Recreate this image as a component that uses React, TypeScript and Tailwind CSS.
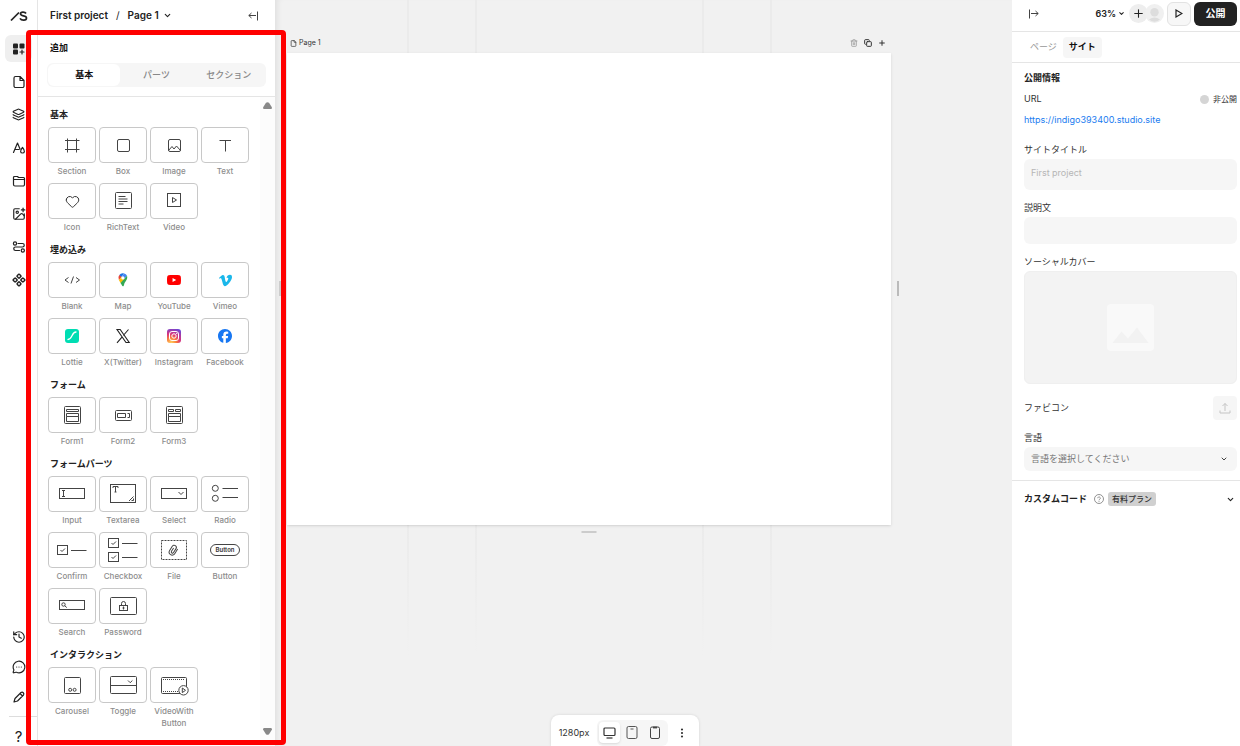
import type { ReactNode } from "react";
import {
  ChevronDown,
  Component,
  Copy,
  EllipsisVertical,
  File,
  Heart,
  History,
  ImagePlus,
  Layers,
  MessageCircleMore,
  Plus,
  Trash2,
} from "lucide-react";
import { SiFacebook, SiVimeo, SiYoutube } from "react-icons/si";

type Tile = { label: string; icon: ReactNode };
type Section = { title: string; tiles: Tile[] };

// Line drawing that fills a tile, coordinates are tile pixels
const Art = ({ children }: { children: ReactNode }) => (
  <svg
    viewBox="1 1 46 34"
    className="h-full w-full"
    fill="none"
    stroke="#444"
    strokeWidth="1"
    aria-hidden="true"
  >
    {children}
  </svg>
);

const sections: Section[] = [
  {
    title: "基本",
    tiles: [
      {
        label: "Section",
        icon: (
          <Art>
            <path d="M19.5 11.5v14M28.5 11.5v14M17 13.5h14.5M17 22.5h14.5" />
          </Art>
        ),
      },
      {
        label: "Box",
        icon: (
          <Art>
            <rect x="18.5" y="12.5" width="12" height="12" rx="1.5" />
          </Art>
        ),
      },
      {
        label: "Image",
        icon: (
          <Art>
            <rect x="18.5" y="12.5" width="12" height="12" rx="1.5" />
            <path d="M18.5 23.5l3.5-4 2 2.5 2.5-3 4 4.5" />
          </Art>
        ),
      },
      {
        label: "Text",
        icon: (
          <Art>
            <path d="M18.5 13.5h11.5M24.5 13.5v11" />
          </Art>
        ),
      },
      {
        label: "Icon",
        icon: <Heart size={15} strokeWidth={1.6} color="#333" />,
      },
      {
        label: "RichText",
        icon: (
          <Art>
            <rect x="16.5" y="9.5" width="16" height="16" rx="1" />
            <path d="M19.5 13.5h7M19.5 16h9M19.5 18.5h9M19.5 21h5" />
          </Art>
        ),
      },
      {
        label: "Video",
        icon: (
          <Art>
            <rect x="17.5" y="10.5" width="13" height="13" />
            <path d="M22.5 14.5v5l4-2.5z" />
          </Art>
        ),
      },
    ],
  },
  {
    title: "埋め込み",
    tiles: [
      {
        label: "Blank",
        icon: (
          <Art>
            <path d="M20.5 15.5l-3.5 2.5 3.5 2.5M28 15.5l3.5 2.5-3.5 2.5M25.5 14.5l-2.5 7" />
          </Art>
        ),
      },
      {
        label: "Map",
        icon: (
          <Art>
            <g stroke="none">
              <path d="M20.3 12.9A4.600 4.600 0 0 1 25.2 11.6L21.7 15.8z" fill="#1a73e8" />
              <path d="M25.2 11.6A4.600 4.600 0 0 1 28 13.8L24.8 17.6 22.4 15z" fill="#4285f4" />
              <path d="M20.3 12.9L22.5 14.9 19.9 18A4.600 4.600 0 0 1 20.3 12.9z" fill="#ea4335" />
              <path d="M19.9 18L22.4 15.1 25.5 17.3 21.6 21z" fill="#fbbc04" />
              <path d="M28 13.8C29.2 17.5 26 19.3 25.2 22.2 24.9 23.4 24.7 24.3 23.9 24.3 23 24.3 22.9 22.8 21.5 21z" fill="#34a853" />
              <circle cx="23.9" cy="15.9" r="1.6" fill="#fff" />
            </g>
          </Art>
        ),
      },
      { label: "YouTube", icon: <SiYoutube size={14} color="#ff0000" /> },
      { label: "Vimeo", icon: <SiVimeo size={13} color="#1ab7ea" /> },
      {
        label: "Lottie",
        icon: (
          <Art>
            <rect x="17" y="11" width="14" height="14" rx="3" fill="#00ddb3" stroke="none" />
            <path
              d="M20 21.5c4.5 0 3.5-7.5 8-7.5"
              stroke="#fff"
              strokeWidth="1.3"
              strokeLinecap="round"
            />
          </Art>
        ),
      },
      {
        label: "X(Twitter)",
        icon: (
          <Art>
            <path d="M18 11.5h3.200l9 13h-3.200zM29.500 11.500l-5.200 6M23.200 18.900l-5.200 5.900" stroke="#222" strokeWidth="1.1" />
          </Art>
        ),
      },
      {
        label: "Instagram",
        icon: (
          <Art>
            <defs>
              <radialGradient id="insta" cx="0.3" cy="1" r="1.1">
                <stop offset="0" stopColor="#ffd45c" />
                <stop offset="0.35" stopColor="#f9793b" />
                <stop offset="0.6" stopColor="#d9337c" />
                <stop offset="1" stopColor="#6a48d8" />
              </radialGradient>
            </defs>
            <rect x="17" y="11" width="14" height="14" rx="3" fill="url(#insta)" stroke="none" />
            <rect x="19.5" y="13.5" width="9" height="9" rx="2.5" stroke="#fff" />
            <circle cx="24" cy="18" r="2.2" stroke="#fff" />
            <circle cx="26.7" cy="15.4" r=".6" fill="#fff" stroke="none" />
          </Art>
        ),
      },
      { label: "Facebook", icon: <SiFacebook size={14} color="#1877f2" /> },
    ],
  },
  {
    title: "フォーム",
    tiles: [
      {
        label: "Form1",
        icon: (
          <Art>
            <rect x="16.5" y="9.5" width="16" height="17" rx="1" />
            <path d="M18.5 12.5h12v2h-12zM18.5 16.5h12v3h-12zM18.5 19.5h12v5h-12z" />
          </Art>
        ),
      },
      {
        label: "Form2",
        icon: (
          <Art>
            <rect x="16.5" y="13.5" width="16" height="10" rx="1" />
            <path d="M18.5 16.5h8v4h-8zM28.5 16.5h2v4h-2" />
          </Art>
        ),
      },
      {
        label: "Form3",
        icon: (
          <Art>
            <rect x="16.5" y="9.5" width="16" height="17" rx="1" />
            <path d="M18.5 12.5h5v2h-5zM25.5 12.5h5v2h-5zM18.5 16.5h12v3h-12zM18.5 19.5h12v5h-12z" />
          </Art>
        ),
      },
    ],
  },
  {
    title: "フォームパーツ",
    tiles: [
      {
        label: "Input",
        icon: (
          <Art>
            <rect x="11.5" y="12.5" width="25" height="10" />
            <path d="M14 14.5h3M15.5 14.5v6M14 20.5h3" />
          </Art>
        ),
      },
      {
        label: "Textarea",
        icon: (
          <Art>
            <rect x="11.5" y="8.5" width="25" height="18" />
            <path d="M14 12v-1.5h5v1.5M16.5 10.5v5.5M15.5 16h2" />
            <path d="M30 25l4.5-4.5M32.5 24.5h2v-2" />
          </Art>
        ),
      },
      {
        label: "Select",
        icon: (
          <Art>
            <rect x="11.5" y="12.5" width="25" height="10" />
            <path d="M28.5 16l2.5 2.5 2.5-2.5" />
          </Art>
        ),
      },
      {
        label: "Radio",
        icon: (
          <Art>
            <circle cx="14.3" cy="12.3" r="3" />
            <circle cx="14.3" cy="22.3" r="3" />
            <path d="M21.5 12.5h15.5M21.5 21.5h15.5" />
          </Art>
        ),
      },
      {
        label: "Confirm",
        icon: (
          <Art>
            <rect x="9.5" y="13.5" width="10" height="9" />
            <path d="M12.5 18l1.5 1.5 3-3M23 18.5h15.5" />
          </Art>
        ),
      },
      {
        label: "Checkbox",
        icon: (
          <Art>
            <rect x="9.5" y="6.5" width="10" height="9" />
            <rect x="9.5" y="20.5" width="10" height="9" />
            <path d="M12.5 11l1.5 1.5 3-3M12.5 25l1.5 1.5 3-3M23 11.5h15.5M23 25.5h15.5" />
          </Art>
        ),
      },
      {
        label: "File",
        icon: (
          <Art>
            <rect x="11.5" y="8.5" width="25" height="19" strokeDasharray="2 1" />
            <g transform="rotate(32 23.5 18)">
              <path d="M26.5 15v5.5a3 3 0 0 1-6 0v-5a2.200 2.200 0 0 1 4.400 0v4.700a1.200 1.200 0 0 1-2.400 0v-4" />
            </g>
          </Art>
        ),
      },
      {
        label: "Button",
        icon: (
          <Art>
            <rect x="9.5" y="12.5" width="29" height="11" rx="5.5" />
            <text
              x="24"
              y="20.200"
              textAnchor="middle"
              className="font-['Inter'] text-[6px] font-semibold"
              fill="#333"
              stroke="none"
            >
              Button
            </text>
          </Art>
        ),
      },
      {
        label: "Search",
        icon: (
          <Art>
            <rect x="11.5" y="12.5" width="25" height="9" />
            <circle cx="15.5" cy="16.5" r="1.7" />
            <path d="M16.8 17.8l2 1.8" />
          </Art>
        ),
      },
      {
        label: "Password",
        icon: (
          <Art>
            <rect x="11.5" y="9.5" width="26" height="17" rx="1" />
            <rect x="20.5" y="17.5" width="8" height="5" />
            <path d="M22.5 17.5v-2a2 2 0 0 1 4 0v2M24.5 18.5v3M23.500 20h2" />
          </Art>
        ),
      },
    ],
  },
  {
    title: "インタラクション",
    tiles: [
      {
        label: "Carousel",
        icon: (
          <Art>
            <rect x="16.5" y="10.5" width="16" height="16" rx="1" />
            <circle cx="22.2" cy="22.8" r="1.5" />
            <circle cx="26.6" cy="22.8" r="1.5" />
          </Art>
        ),
      },
      {
        label: "Toggle",
        icon: (
          <Art>
            <rect x="11.5" y="9.5" width="26" height="17" rx="1" />
            <path d="M11.5 18.5h26M29 13.5l2.200 2.200 2.200-2.200" />
          </Art>
        ),
      },
      {
        label: "VideoWith Button",
        icon: (
          <Art>
            <rect x="11.5" y="10.5" width="25" height="16" rx="1" />
            <path d="M13 12.5h22M13 24.5h16" strokeDasharray="1 1" />
            <circle cx="33.5" cy="23.3" r="4.7" fill="#fff" />
            <path d="M32.3 21v4.600l3.200-2.300z" />
          </Art>
        ),
      },
    ],
  },
];

// 14px icons of the left rail
const RailSvg = ({ children }: { children: ReactNode }) => (
  <svg
    viewBox="0 0 14 14"
    className="h-3.5 w-3.5 shrink-0"
    fill="none"
    stroke="#222"
    strokeWidth="1.2"
    strokeLinecap="round"
    strokeLinejoin="round"
    aria-hidden="true"
  >
    {children}
  </svg>
);

const railTop = [
  {
    name: "追加",
    icon: (
      <RailSvg>
        <g fill="#222" stroke="none">
          <rect x="1" y="1.5" width="5" height="5" rx="1" />
          <rect x="7.5" y="1.5" width="5" height="5" rx="1" />
          <rect x="1" y="7.5" width="5" height="5" rx="1" />
        </g>
        <path d="M10 8v4M8 10h4" />
      </RailSvg>
    ),
  },
  {
    name: "ページ",
    icon: (
      <RailSvg>
        <path d="M3.5 1.5h4.5l4 4v5.5a1.5 1.5 0 0 1-1.5 1.5h-7A1.5 1.5 0 0 1 2 11V3a1.5 1.5 0 0 1 1.5-1.5zM8 1.5v4h4" />
      </RailSvg>
    ),
  },
  { name: "レイヤー", icon: <Layers size={13} strokeWidth={2} color="#222" /> },
  {
    name: "スタイル",
    icon: (
      <RailSvg>
        <path d="M1.500 11.500L5.500 2l2.500 6M3 8.500h4M10.500 6.500c3 3.500 2 5.500 0 5.500s-3-2 0-5.500z" />
      </RailSvg>
    ),
  },
  {
    name: "フォルダ",
    icon: (
      <RailSvg>
        <path d="M1.5 5.5h11M1.5 10.5v-7a1 1 0 0 1 1-1h3l1 1h5a1 1 0 0 1 1 1v6a1.500 1.500 0 0 1-1.500 1.500H3a1.500 1.500 0 0 1-1.500-1.500z" />
      </RailSvg>
    ),
  },
  { name: "画像", icon: <ImagePlus size={14} strokeWidth={2} color="#222" /> },
  {
    name: "フロー",
    icon: (
      <RailSvg>
        <circle cx="3" cy="3.5" r="1.6" />
        <circle cx="10.8" cy="10.5" r="1.6" />
        <path d="M6 3.500h4.500a1.500 1.500 0 0 1 0 3.500H3.500a1.600 1.600 0 0 0 0 3.500H7.500" />
      </RailSvg>
    ),
  },
  {
    name: "コンポーネント",
    icon: <Component size={14} strokeWidth={2.4} color="#222" />,
  },
];

const railBottom = [
  { name: "履歴", icon: <History size={14} strokeWidth={2} color="#222" /> },
  {
    name: "コメント",
    icon: <MessageCircleMore size={14} strokeWidth={2} color="#222" />,
  },
  {
    name: "編集",
    icon: (
      <RailSvg>
        <path d="M2 12l1-3.500 6-6a1.800 1.800 0 0 1 2.500 2.500L5.500 11zM8 3.500l2.500 2.500" />
      </RailSvg>
    ),
  },
];

const Rail = () => (
  <nav className="flex w-[38px] shrink-0 flex-col border-r border-[#e5e5e5] bg-white pl-[5px]">
    <div className="flex h-[35px] w-[27px] items-center justify-center pb-1">
      <svg
        viewBox="0 0 18 12"
        className="h-3 w-[18px]"
        fill="none"
        stroke="#222"
        strokeWidth="1.7"
        aria-hidden="true"
      >
        <path d="M1 10.500L9 2.500" />
        <path d="M16 3.500c-1-2-5.500-2-5.500.3 0 3 6 1.200 6 4.200 0 2.800-5 3-6.500.3" />
      </svg>
    </div>
    <div className="flex flex-col gap-1.5">
      {railTop.map((item, i) => (
        <button
          key={item.name}
          aria-label={item.name}
          className={
            i === 0
              ? "flex h-[27px] w-[27px] items-center justify-center rounded-md bg-[#efefef]"
              : "flex h-[27px] w-[27px] items-center justify-center"
          }
        >
          {item.icon}
        </button>
      ))}
    </div>
    <div className="mt-auto flex flex-col">
      {railBottom.map((item) => (
        <button
          key={item.name}
          aria-label={item.name}
          className="flex h-[30px] w-[27px] items-center justify-center"
        >
          {item.icon}
        </button>
      ))}
      <div className="mt-1 ml-1 border-t border-[#ddd]" />
      <button
        aria-label="ヘルプ"
        className="mt-[11px] flex h-[18px] w-[27px] items-center justify-center text-[15px] text-[#222]"
      >
        ?
      </button>
    </div>
  </nav>
);

const ElementPanel = () => (
  <aside className="flex w-[237px] shrink-0 flex-col bg-white">
    <header className="flex h-[31px] shrink-0 items-center pr-[17px] pl-3 text-[10px] font-semibold text-[#222]">
      <span>First project</span>
      <span className="px-2 font-normal">/</span>
      <button className="flex items-center gap-1">
        Page 1
        <ChevronDown size={9} strokeWidth={3} />
      </button>
      <button aria-label="パネルを閉じる" className="ml-auto">
        <svg
          viewBox="0 0 10 10"
          className="h-2.5 w-2.5"
          fill="none"
          stroke="#444"
          aria-hidden="true"
        >
          <path d="M9.500 .500v9M8 4.500H.8M3.500 2L.8 4.500 3.500 7" />
        </svg>
      </button>
    </header>
    <h2 className="px-3 pt-[11px] text-[9px] leading-3 font-bold text-[#111]">
      追加
    </h2>
    <div className="mx-[9px] mt-[9px] flex h-6 rounded-md bg-[#f6f6f6] p-px text-[9px] font-medium text-[#888]">
      <button className="flex-1 rounded-md bg-white font-bold text-[#111]">
        基本
      </button>
      <button className="flex-1">パーツ</button>
      <button className="flex-1">セクション</button>
    </div>
    <div className="mt-[9px] flex min-h-0 flex-1 border-t border-[#e5e5e5]">
      <div className="flex min-w-0 flex-1 flex-col gap-[11px] overflow-hidden pt-3 pl-2.5">
        {sections.map((section) => (
          <section key={section.title}>
            <h3 className="mb-1.5 pl-0.5 text-[9px] leading-3 font-bold text-[#222]">
              {section.title}
            </h3>
            <div className="flex flex-wrap gap-x-[3px] gap-y-1.5">
              {section.tiles.map((tile) => (
                <button
                  key={tile.label}
                  className="flex w-12 flex-col items-center"
                >
                  <span className="flex h-9 w-12 items-center justify-center rounded border border-[#c8c8c8] bg-white">
                    {tile.icon}
                  </span>
                  <span className="mt-0.5 text-center text-[8px] leading-3 font-medium text-[#8d8d8d]">
                    {tile.label}
                  </span>
                </button>
              ))}
            </div>
          </section>
        ))}
      </div>
      <div className="flex w-[15px] shrink-0 flex-col items-center justify-between bg-[#fcfcfc] pt-[5px] pb-[11px]">
        <svg viewBox="0 0 9 7" className="h-[7px] w-[9px]" fill="#888" aria-hidden="true">
          <path d="M3 .8Q4.500-.5 6 .8L9 5.500Q9 7 8 7H1Q0 7 0 5.500z" />
        </svg>
        <svg viewBox="0 0 9 7" className="h-[7px] w-[9px]" fill="#888" aria-hidden="true">
          <path d="M3 6.200Q4.500 7.500 6 6.200L9 1.500Q9 0 8 0H1Q0 0 0 1.500z" />
        </svg>
      </div>
    </div>
  </aside>
);

const Canvas = () => (
  <main className="relative flex min-w-0 flex-1 flex-col bg-[#f1f1f1] shadow-[inset_6px_0_6px_-4px_rgba(0,0,0,0.08)]">
    {/* faint guide lines of the breakpoints */}
    <svg
      className="pointer-events-none absolute inset-0 h-full w-full"
      aria-hidden="true"
    >
      <defs>
        <linearGradient id="guide" x1="0" y1="0" x2="0" y2="1">
          <stop offset="0" stopColor="#ebebeb" />
          <stop offset="0.7" stopColor="#ebebeb" />
          <stop offset="0.88" stopColor="#ebebeb" stopOpacity="0" />
        </linearGradient>
      </defs>
      <g fill="url(#guide)">
        <rect x="132" y="0" width="2" height="100%" />
        <rect x="200" y="0" width="2" height="100%" />
        <rect x="427" y="0" width="2" height="100%" />
        <rect x="495" y="0" width="2" height="100%" />
      </g>
    </svg>
    <div className="relative pr-[121px] pl-3">
      <div className="flex h-[53px] items-end pr-[5px] pb-1.5 pl-[3px] text-[7px] leading-2 text-[#333]">
        <span className="flex items-center gap-0.5">
          <File size={7} strokeWidth={2.4} />
          Page 1
        </span>
        <div className="ml-auto flex gap-1.5">
          <button aria-label="削除" className="text-[#999]">
            <Trash2 size={8} strokeWidth={2.4} />
          </button>
          <button aria-label="複製">
            <Copy size={8} strokeWidth={3} />
          </button>
          <button aria-label="追加">
            <Plus size={8} strokeWidth={3} />
          </button>
        </div>
      </div>
      <div className="relative aspect-[32/25] bg-white shadow-sm">
        <div className="absolute top-1/2 -left-2 h-[15px] w-0.5 -translate-y-2 bg-[#ccc]" />
        <div className="absolute top-1/2 -right-2 h-[15px] w-0.5 -translate-y-2 bg-[#bbb]" />
        <div className="absolute -bottom-2 left-1/2 h-0.5 w-[15px] -translate-x-1/2 bg-[#ccc]" />
      </div>
    </div>
    <div className="relative mt-auto flex justify-center pr-[37px]">
      <div className="flex h-[31px] items-center rounded-t-lg bg-white pt-1 pr-[11px] pl-2 text-[9px] text-[#333] shadow-[0_0_3px_rgba(0,0,0,0.12)]">
        <span>1280px</span>
        <div className="ml-2 flex h-[26px] items-center rounded-md bg-[#f6f6f6] px-0.5">
          <button
            aria-label="デスクトップ"
            className="flex h-[21px] w-[21px] items-center justify-center rounded bg-white shadow-sm"
          >
            <svg
              viewBox="0 0 13 12"
              className="h-3 w-[13px]"
              fill="none"
              stroke="#333"
              strokeWidth="1.2"
              aria-hidden="true"
            >
              <rect x="1" y="1" width="11" height="7.5" rx="1" />
              <path d="M3.500 11h6" />
            </svg>
          </button>
          <button
            aria-label="タブレット"
            className="flex h-[21px] w-[23px] items-center justify-center"
          >
            <svg
              viewBox="0 0 12 13"
              className="h-[13px] w-3"
              fill="none"
              stroke="#555"
              aria-hidden="true"
            >
              <rect x="1" y=".5" width="10" height="12" rx="1.5" />
              <path d="M4.500 3h3" />
            </svg>
          </button>
          <button
            aria-label="モバイル"
            className="flex h-[21px] w-[23px] items-center justify-center"
          >
            <svg
              viewBox="0 0 10 13"
              className="h-[13px] w-2.5"
              fill="none"
              stroke="#444"
              aria-hidden="true"
            >
              <rect x=".5" y="1" width="9" height="11.5" rx="1.5" />
              <path d="M3 1.500h4" strokeWidth="1.8" />
            </svg>
          </button>
        </div>
        <button aria-label="メニュー" className="ml-2">
          <EllipsisVertical size={12} strokeWidth={2.4} />
        </button>
      </div>
    </div>
  </main>
);

const labelClass = "block text-[9px] leading-3 text-[#333]";

const SettingsPanel = () => (
  <aside className="flex w-[228px] shrink-0 flex-col bg-white text-[#222] shadow-[0_0_6px_rgba(0,0,0,0.08)]">
    <header className="flex h-8 shrink-0 items-center border-b border-[#e5e5e5] pr-[3px] pb-1 pl-[17px]">
      <button aria-label="パネルを閉じる">
        <svg
          viewBox="0 0 10 10"
          className="h-2.5 w-2.5"
          fill="none"
          stroke="#444"
          aria-hidden="true"
        >
          <path d="M.5 .500v9M2 4.500h7.200M6.500 2L9.200 4.500 6.500 7" />
        </svg>
      </button>
      <button className="ml-auto flex items-center gap-0.5 text-[9px] font-semibold">
        63%
        <ChevronDown size={7} strokeWidth={3.5} />
      </button>
      <button
        aria-label="招待"
        className="ml-1 flex h-[19px] w-[19px] items-center justify-center rounded-full bg-[#eee]"
      >
        <Plus size={13} strokeWidth={2} />
      </button>
      <svg viewBox="0 0 19 19" className="-ml-[3px] h-[19px] w-[19px]" aria-hidden="true">
        <circle cx="9.5" cy="9.5" r="9.5" fill="#f0f0f0" />
        <circle cx="9.5" cy="8.2" r="4.2" fill="#ddd" />
        <path d="M4 15.500q5.500-4 11 0-5.500 4.500-11 0z" fill="#ddd" />
      </svg>
      <button
        aria-label="プレビュー"
        className="ml-[3px] flex h-6 w-6 items-center justify-center rounded-md border border-[#e2e2e2] bg-[#f7f7f7]"
      >
        <svg
          viewBox="0 0 8 9"
          className="h-[9px] w-2"
          fill="none"
          stroke="#222"
          strokeWidth="1.2"
          aria-hidden="true"
        >
          <path d="M1 1v7l6-3.500z" />
        </svg>
      </button>
      <button className="ml-[3px] h-6 w-[43px] rounded-md bg-[#222] text-[10px] font-bold text-white">
        公開
      </button>
    </header>
    <div className="flex h-[31px] shrink-0 items-center border-b border-[#e5e5e5] pl-3 text-[9px]">
      <button className="h-[21px] px-1.5 text-[#999]">ページ</button>
      <button className="h-[21px] rounded bg-[#f6f6f6] px-1.5 font-bold text-[#111]">
        サイト
      </button>
    </div>
    <div className="flex flex-col border-b border-[#e5e5e5] pt-[9px] pr-[3px] pb-[9px] pl-3">
      <h2 className="text-[9px] leading-3 font-bold">公開情報</h2>
      <div className="mt-[9px] flex items-center text-[9px] leading-3 text-[#333]">
        <span>URL</span>
        <span className="mr-1 ml-auto h-[9px] w-[9px] rounded-full bg-[#d5d5d5]" />
        <span className="text-[8px]">非公開</span>
      </div>
      <a
        href="https://indigo393400.studio.site"
        className="mt-[9px] text-[9px] leading-3 text-[#1a7cf0]"
      >
        https://indigo393400.studio.site
      </a>
      <label htmlFor="title" className={`mt-[18px] ${labelClass}`}>
        サイトタイトル
      </label>
      <input
        id="title"
        placeholder="First project"
        className="mt-[3px] h-[31px] w-full rounded-md bg-[#f6f6f6] px-[7px] pb-1 text-[9px] placeholder:text-[#b5b5b5]"
      />
      <label htmlFor="description" className={`mt-3 ${labelClass}`}>
        説明文
      </label>
      <input
        id="description"
        className="mt-[3px] h-[27px] w-full rounded-md bg-[#f6f6f6] px-[7px] text-[9px]"
      />
      <span className={`mt-3 ${labelClass}`}>ソーシャルカバー</span>
      <div className="mt-[3px] flex h-[113px] items-center justify-center rounded-md border border-[#efefef] bg-[#f3f3f3]">
        <svg viewBox="0 0 47 47" className="h-[47px] w-[47px]" aria-hidden="true">
          <rect width="47" height="47" rx="4" fill="#f9f9f9" />
          <path d="M5.500 39l9-11.500 6.500 7 9-11 11.500 15.500z" fill="#f2f2f2" />
        </svg>
      </div>
      <div className="mt-3 flex items-center">
        <span className={labelClass}>ファビコン</span>
        <button
          aria-label="アップロード"
          className="ml-auto flex h-6 w-6 items-center justify-center rounded bg-[#f6f6f6]"
        >
          <svg
            viewBox="0 0 12 12"
            className="h-3 w-3"
            fill="none"
            stroke="#c4c4c4"
            aria-hidden="true"
          >
            <path d="M6 9V1.500M3.500 4L6 1.500 8.500 4M1 8.500V11h10V8.500" />
          </svg>
        </button>
      </div>
      <label htmlFor="lang" className={`mt-3 ${labelClass}`}>
        言語
      </label>
      <div className="relative mt-[3px]">
        <select
          id="lang"
          className="block h-6 w-full appearance-none rounded-md bg-[#f6f6f6] px-[7px] text-[9px] text-[#777]"
        >
          <option>言語を選択してください</option>
        </select>
        <ChevronDown
          size={8}
          strokeWidth={3}
          color="#444"
          className="pointer-events-none absolute top-2 right-[9px]"
        />
      </div>
    </div>
    <button className="flex h-9 items-center pr-[5px] pl-3 text-[9px] font-bold text-[#222]">
      カスタムコード
      <svg
        viewBox="0 0 10 10"
        className="ml-[7px] h-2.5 w-2.5"
        fill="none"
        stroke="#777"
        strokeWidth=".8"
        aria-hidden="true"
      >
        <circle cx="5" cy="5" r="4.5" />
        <path d="M3.700 4.200a1.300 1.300 0 1 1 2 1.100q-.7.4-.7 1M5 7v.8" />
      </svg>
      <span className="ml-1 h-3.5 rounded-[3px] bg-[#d0d0d0] px-1 text-[8px] leading-3.5 font-medium text-[#333]">
        有料プラン
      </span>
      <ChevronDown size={9} strokeWidth={3} className="ml-auto" />
    </button>
  </aside>
);

const App = () => (
  <div className="relative flex h-screen overflow-hidden font-['Inter','Noto_Sans_CJK_JP',sans-serif]">
    <Rail />
    <ElementPanel />
    <Canvas />
    <SettingsPanel />
    {/* highlight around the element panel */}
    <div className="pointer-events-none absolute top-[30px] bottom-px left-[26px] w-[260px] rounded-sm border-5 border-[#ff0000]" />
  </div>
);

export default App;
